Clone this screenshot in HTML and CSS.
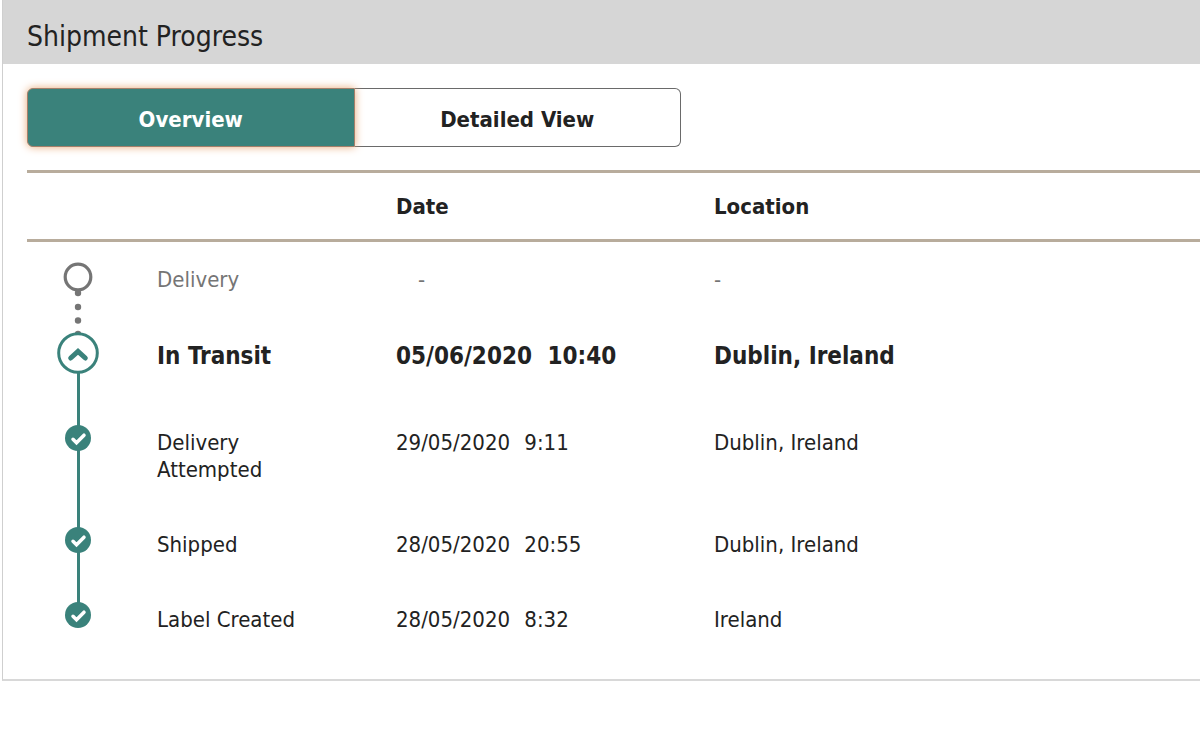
FILE: index.html
```
<!DOCTYPE html>
<html lang="en">
<head>
<meta charset="UTF-8">
<meta name="viewport" content="width=device-width, initial-scale=1.0">
<title>Shipment Progress</title>
<link rel="stylesheet" href="styles.css">
</head>
<body>
  <section class="panel">
    <h2 class="panel-title">Shipment Progress</h2>
    <div class="panel-body">
      <div class="tabs">
        <button type="button" class="tab active">Overview</button>
        <button type="button" class="tab">Detailed View</button>
      </div>

      <table class="progress">
        <colgroup>
          <col class="col-icon">
          <col class="col-status">
          <col class="col-date">
          <col>
        </colgroup>
        <thead>
          <tr>
            <td></td>
            <td></td>
            <th scope="col">Date</th>
            <th scope="col">Location</th>
          </tr>
        </thead>
        <tbody>
          <tr class="pending">
            <td class="icon">
              <svg width="30" height="55" viewBox="0 0 30 55">
                <circle cx="15" cy="15" r="12.800" fill="#fff" stroke="#757575" stroke-width="3.200"/>
                <g fill="#757575">
                  <circle cx="15" cy="31" r="3.200"/>
                  <circle cx="15" cy="45" r="3.200"/>
                  <circle cx="15" cy="58.500" r="3.200"/>
                  <circle cx="15" cy="72" r="3.200"/>
                </g>
              </svg>
            </td>
            <td>Delivery</td>
            <td class="empty">-</td>
            <td>-</td>
          </tr>
          <tr class="current">
            <td class="icon">
              <svg width="42" height="42" viewBox="0 0 42 42">
                <circle cx="21" cy="20" r="19.300" fill="#fff" stroke="#3a827b" stroke-width="3"/>
                <path d="M13.700 25 L21 18.300 L28.300 25" fill="none" stroke="#3a827b" stroke-width="5" stroke-linecap="round"/>
              </svg>
            </td>
            <td>In Transit</td>
            <td>05/06/2020 <span class="time">10:40</span></td>
            <td>Dublin, Ireland</td>
          </tr>
          <tr class="done">
            <td class="icon">
              <svg width="26" height="26" viewBox="0 0 26 26">
                <circle cx="13" cy="13" r="13" fill="#3a827b"/>
                <path d="M8 14.300 L11.500 17.800 L19 10.200" fill="none" stroke="#fff" stroke-width="3.500" stroke-linecap="round"/>
              </svg>
            </td>
            <td>Delivery<br>Attempted</td>
            <td>29/05/2020 <span class="time">9:11</span></td>
            <td>Dublin, Ireland</td>
          </tr>
          <tr class="done">
            <td class="icon">
              <svg width="26" height="26" viewBox="0 0 26 26">
                <circle cx="13" cy="13" r="13" fill="#3a827b"/>
                <path d="M8 14.300 L11.500 17.800 L19 10.200" fill="none" stroke="#fff" stroke-width="3.500" stroke-linecap="round"/>
              </svg>
            </td>
            <td>Shipped</td>
            <td>28/05/2020 <span class="time">20:55</span></td>
            <td>Dublin, Ireland</td>
          </tr>
          <tr class="done first">
            <td class="icon">
              <svg width="26" height="26" viewBox="0 0 26 26">
                <circle cx="13" cy="13" r="13" fill="#3a827b"/>
                <path d="M8 14.300 L11.500 17.800 L19 10.200" fill="none" stroke="#fff" stroke-width="3.500" stroke-linecap="round"/>
              </svg>
            </td>
            <td>Label Created</td>
            <td>28/05/2020 <span class="time">8:32</span></td>
            <td>Ireland</td>
          </tr>
        </tbody>
      </table>
    </div>
  </section>
</body>
</html>
```
FILE: styles.css
```
body {
  margin: 0;
  background: #fff;
  color: #222;
  font-family: "DejaVu Sans Condensed", Tahoma, sans-serif;
  font-size: 22px;
  line-height: 27px;
}

.panel {
  margin-left: 2px;
  border-left: 1px solid #cfcfcf;
  border-bottom: 2px solid #d8d8d8;
}

.panel-title {
  margin: 0;
  padding: 19px 24px 9px;
  background: #d6d6d6;
  font-size: 28px;
  font-weight: 400;
  line-height: 36px;
}

.panel-body {
  padding: 24px 0 22px 24px;
}

/* Tabs */
.tabs {
  display: flex;
  max-width: 654px;
  margin-bottom: 23px;
}

.tab {
  flex: 1;
  height: 59px;
  padding: 4px 0 0;
  border: 1px solid #6a6a6a;
  border-left: 0;
  border-radius: 0 6px 6px 0;
  background: #fff;
  color: #222;
  font: inherit;
  font-weight: 700;
  cursor: pointer;
}

.tab.active {
  position: relative;
  border: 1px solid #a5806a;
  border-radius: 6px 0 0 6px;
  background: #3a827b;
  color: #fff;
  box-shadow: 0 0 8px #e8a978;
}

/* Progress table */
.progress {
  width: 100%;
  border-spacing: 0;
  table-layout: fixed;
}

.col-icon { width: 102px; }
.col-status { width: 267px; }
.col-date { width: 318px; }

.progress thead th,
.progress thead td {
  height: 66px;
  padding: 0;
  border-top: 3px solid #b8ac9c;
  border-bottom: 3px solid #b8ac9c;
  text-align: left;
}

.progress tbody td {
  padding: 24px 0;
  vertical-align: top;
}

.progress tbody td:nth-child(2) {
  padding-left: 28px;
}

.progress .pending td {
  color: #757575;
}

.progress .pending td.empty {
  padding-left: 22px;
}

.progress .current td {
  padding-top: 26px;
  padding-bottom: 35px;
  font-size: 24px;
  font-weight: 700;
}

.time {
  margin-left: 8px;
}

/* Icons joined by a vertical line */
.progress tbody td.icon {
  padding: 20px 0 0;
  text-align: center;
}

.icon svg {
  display: block;
  margin: 0 auto;
  overflow: visible;
}

.progress .current td.icon {
  padding-top: 16px;
}

.current .icon,
.done .icon {
  background: linear-gradient(#3a827b, #3a827b) center bottom / 3px 100% no-repeat;
}

.progress .current .icon {
  background-size: 3px 50%;
}

.progress .first .icon {
  background-position: center top;
  background-size: 3px 30px;
}
```
